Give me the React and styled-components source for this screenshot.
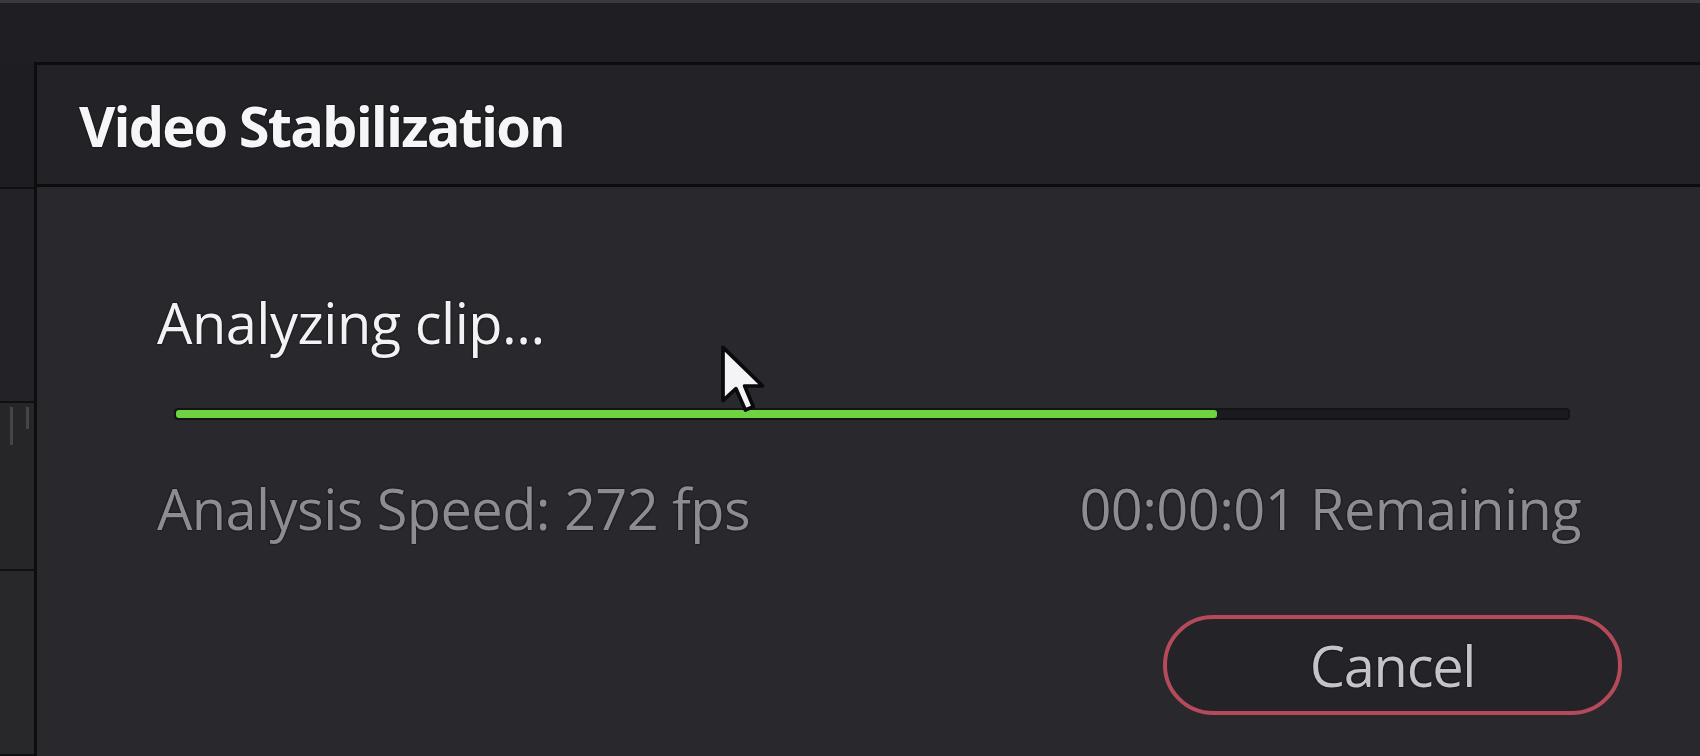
import React from "react";
import styled, { createGlobalStyle } from "styled-components";

const GlobalStyle = createGlobalStyle`
  html, body {
    margin: 0;
    padding: 0;
    background: #1f1f23;
    overflow: hidden;
  }
  #root {
    width: 1700px;
    height: 756px;
  }
`;

const App = () => {
  return (
    <>
      <GlobalStyle />
      <Screen>
        <TopStrip />
        <Workspace>
          <SidePanel>
            <SideBlock tone="#1e1e22" height="122px" />
            <SideBlock tone="#232327" height="212px" />
            <SideBlock tone="#262629" height="166px">
              <Ticks>
                <Tick />
                <Tick short />
              </Ticks>
            </SideBlock>
            <SideBlock tone="#28282b" />
          </SidePanel>

          {/* dialog */}
          <Dialog>
            <TitleBar>
              <Title>Video Stabilization</Title>
            </TitleBar>
            <Body>
              <Status>Analyzing clip...</Status>
              <Track>
                <Fill style={{ width: `${(1218 - 176) / (1570 - 176) * 100}%` }} />
              </Track>
              <Stats>
                <StatText>Analysis Speed: 272 fps</StatText>
                <StatText>00:00:01 Remaining</StatText>
              </Stats>
              <Actions>
                <CancelButton>Cancel</CancelButton>
              </Actions>
              <Cursor viewBox="0 0 14 21">
                <path
                  d="M1 1 L1 17 L4.9 13.4 L7.7 19.8 L10.1 18.8 L7.5 12.6 L12.9 12.6 Z"
                  fill="#f4f4f6"
                  stroke="#0a0a0c"
                  strokeWidth="1.1"
                  strokeLinejoin="round"
                />
              </Cursor>
            </Body>
          </Dialog>
        </Workspace>
      </Screen>
    </>
  );
};

const Screen = styled.div`
  display: flex;
  flex-direction: column;
  width: 1700px;
  height: 756px;
  background: #1f1f23;
  font-family: "Open Sans", "Noto Sans", sans-serif;
`;

const TopStrip = styled.div`
  height: 65px;
  flex: none;
  background: #1f1f23;
  border-top: 3px solid #3a3a3e;
  box-sizing: border-box;
`;

const Workspace = styled.div`
  display: flex;
  flex: 1;
  min-height: 0;
`;

const SidePanel = styled.div`
  width: 34px;
  flex: none;
  display: flex;
  flex-direction: column;
`;

const SideBlock = styled.div`
  height: ${(props) => props.height || "auto"};
  flex: ${(props) => (props.height ? "none" : "1")};
  background: ${(props) => props.tone};
  border-bottom: 2px solid #101013;
  position: relative;
`;

const Ticks = styled.div`
  position: absolute;
  left: 10px;
  top: 4px;
  display: flex;
  gap: 13px;
  align-items: flex-start;
`;

const Tick = styled.div`
  width: 3px;
  height: ${(props) => (props.short ? "22px" : "38px")};
  background: #5a5a5f;
  opacity: 0.6;
`;

const Dialog = styled.div`
  flex: 1;
  display: flex;
  flex-direction: column;
  border-left: 3px solid #0d0d10;
  border-top: 3px solid #0d0d10;
  margin-top: -3px;
  background: #28282d;
`;

const TitleBar = styled.div`
  height: 119px;
  flex: none;
  display: flex;
  align-items: center;
  padding-left: 42px;
  background: #222227;
  border-bottom: 3px solid #0d0d10;
`;

const Title = styled.div`
  color: #f6f6f8;
  font-size: 56px;
  font-weight: 700;
  line-height: 1;
  letter-spacing: -1.9px;
  text-shadow: 0 0 2px #000;
`;

const Body = styled.div`
  position: relative;
  flex: 1;
  display: flex;
  flex-direction: column;
  padding: 107px 78px 0 120px;
`;

const Status = styled.div`
  color: #f2f2f4;
  font-size: 56px;
  line-height: 1;
  letter-spacing: -0.5px;
  text-shadow: 0 0 2px #000;
`;

const Track = styled.div`
  margin: 58px 52px 0 17px;
  height: 8px;
  border-radius: 4px;
  background: #1b1b1f;
  border: 2px solid #141417;
  display: flex;
`;

const Fill = styled.div`
  height: 100%;
  background: #6fd240;
  border-radius: 3px;
`;

const Stats = styled.div`
  margin: 60px 41px 0 0;
  display: flex;
  justify-content: space-between;
`;

const StatText = styled.div`
  color: #8c8c91;
  font-size: 56px;
  line-height: 1;
  letter-spacing: -0.6px;
  text-shadow: 0 0 2px #000;
`;

const Actions = styled.div`
  margin-top: 79px;
  display: flex;
  justify-content: flex-end;
`;

const CancelButton = styled.button`
  width: 459px;
  height: 100px;
  box-sizing: border-box;
  border: 4px solid #b44a5a;
  border-radius: 50px;
  background: #232328;
  color: #c4c4c8;
  font-family: "Open Sans", "Noto Sans", sans-serif;
  font-size: 56px;
  line-height: 1;
  letter-spacing: -1.3px;
  text-shadow: 0 0 2px #000;
  padding: 0;
`;

const Cursor = styled.svg`
  position: absolute;
  left: 682px;
  top: 157px;
  width: 48px;
  height: 70px;
`;

export default App;
